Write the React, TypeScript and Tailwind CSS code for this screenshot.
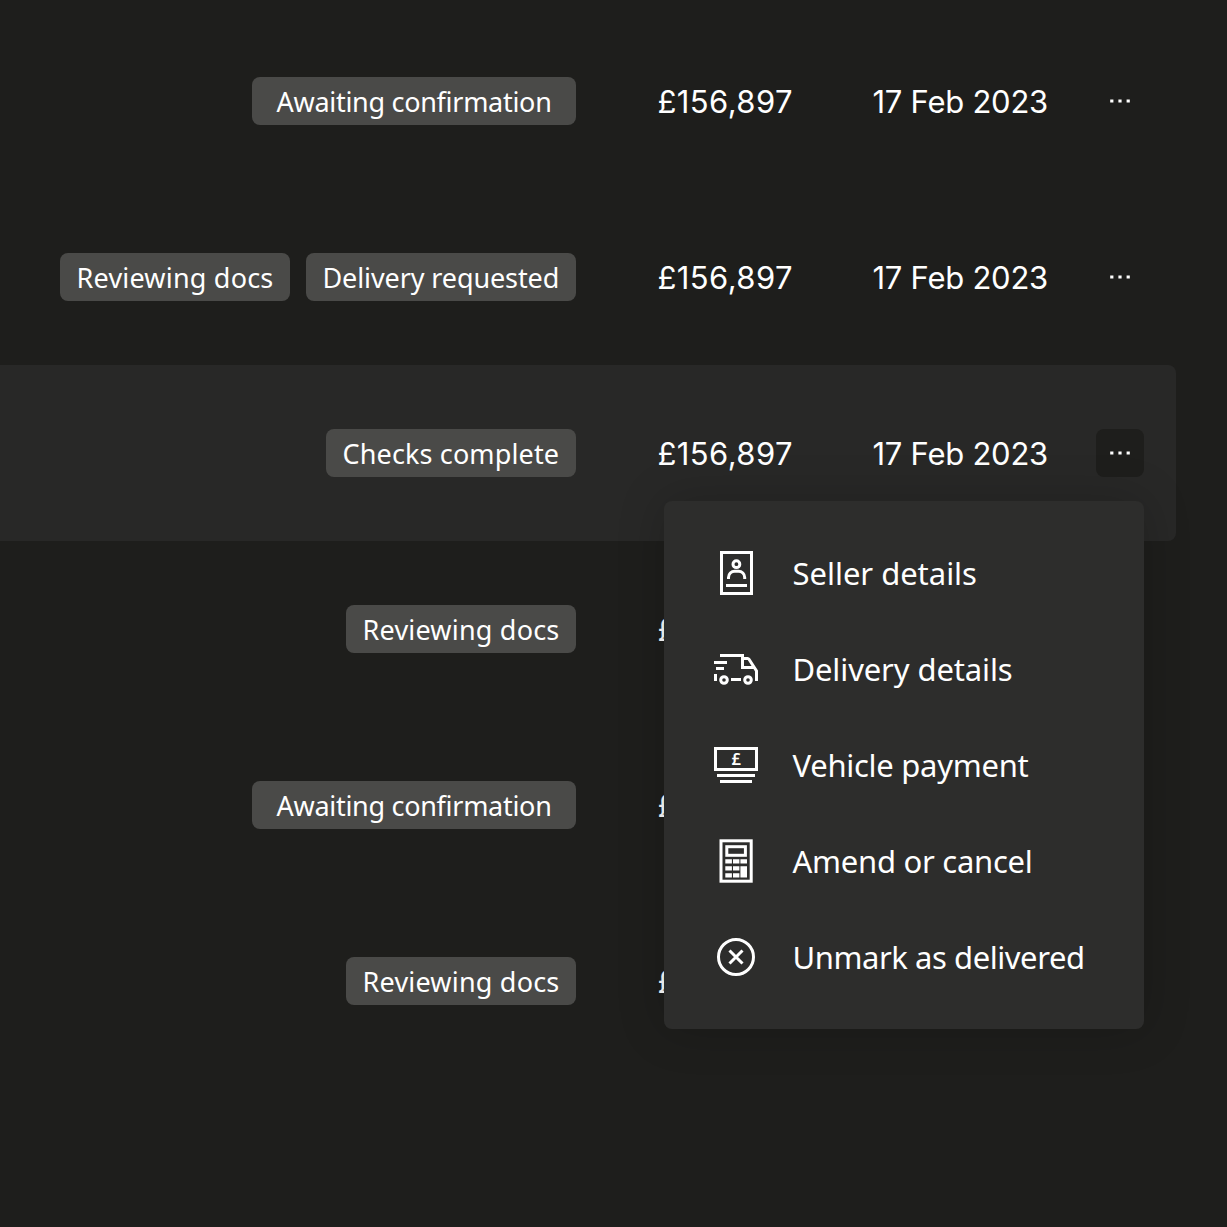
import type { ReactNode } from "react";

type Tag = "awaiting" | "reviewing" | "requested" | "checks";

const tags: Record<Tag, { label: string; style: string }> = {
  awaiting: { label: "Awaiting confirmation", style: "w-[324px] pl-[24.5px] tracking-[-0.29px]" },
  reviewing: { label: "Reviewing docs", style: "w-[230px] pl-[16.5px] tracking-[0.2px]" },
  requested: { label: "Delivery requested", style: "w-[270px] pl-[16.5px] tracking-[-0.11px]" },
  checks: { label: "Checks complete", style: "w-[250px] pl-[16.5px] tracking-[0.14px]" },
};

const rows: { tags: Tag[]; date?: string; open?: boolean }[] = [
  { tags: ["awaiting"], date: "17 Feb 2023" },
  { tags: ["reviewing", "requested"], date: "17 Feb 2023" },
  { tags: ["checks"], date: "17 Feb 2023", open: true },
  { tags: ["reviewing"] },
  { tags: ["awaiting"] },
  { tags: ["reviewing"] },
];

function Icon({ children }: { children: ReactNode }) {
  return (
    <svg className="size-12 shrink-0" viewBox="0 0 48 48" fill="none" stroke="currentColor" strokeWidth="3">
      {children}
    </svg>
  );
}

const SellerIcon = () => (
  <Icon>
    <rect x="9.5" y="3.5" width="30" height="41" />
    <circle cx="24.4" cy="15.2" r="3.4" />
    <path d="M16.5 30v-1.6a6.2 6.2 0 0 1 6.2-6.2h3.8a6.2 6.2 0 0 1 6.2 6.2V30M14 36.5h21" />
  </Icon>
);

const TruckIcon = () => (
  <Icon>
    <path d="M8 10.5h24M2 17.5h13M4 23.5h8M3.5 29v7M19 34.5h10" />
    <path d="M30.5 9v13.5h12.3M32 13.5h3.6q.9 0 1.4.8L44.5 26v10" />
    <circle cx="12" cy="35" r="3.3" />
    <circle cx="36" cy="35" r="3.3" />
  </Icon>
);

const PaymentIcon = () => (
  <Icon>
    <path d="M3.5 7.5h41v21h-41zM5 34.5h38M8 40.5h32" />
    <text
      x="24.3"
      y="24"
      textAnchor="middle"
      fill="currentColor"
      stroke="none"
      className="font-['Noto_Sans'] text-[16.5px] font-semibold"
    >
      £
    </text>
  </Icon>
);

const CalculatorIcon = () => (
  <Icon>
    <rect x="9" y="3.8" width="30.2" height="40.4" />
    <rect x="14.8" y="9.7" width="18.6" height="8.6" />
    <path
      fill="currentColor"
      stroke="none"
      d="M13.3 22.2h6.6v4.2h-6.6zM21 22.2h6.4v4.2H21zM28.4 22.2H35v4.2h-6.6zM13.3 29.2h6.6v4.2h-6.6zM21 29.2h6.4v4.2H21zM13.3 36.2h6.6v4.2h-6.6zM21 36.2h6.4v4.2H21zM28.4 29.2H35v11.2h-6.6z"
    />
  </Icon>
);

const CancelIcon = () => (
  <Icon>
    <circle cx="24" cy="24" r="17.5" />
    <path d="m17.5 17.5 13 13m0-13-13 13" />
  </Icon>
);

const menu = [
  { label: "Seller details", icon: SellerIcon, style: "tracking-[-0.03px]" },
  { label: "Delivery details", icon: TruckIcon, style: "tracking-[-0.12px]" },
  { label: "Vehicle payment", icon: PaymentIcon, style: "tracking-[-0.28px]" },
  { label: "Amend or cancel", icon: CalculatorIcon, style: "tracking-[-0.26px]" },
  { label: "Unmark as delivered", icon: CancelIcon, style: "tracking-[-0.44px]" },
];

function Menu() {
  return (
    <div className="absolute top-[72px] right-0 z-10 w-[480px] rounded-lg bg-[#2d2d2c] py-6 shadow-[0_0_48px_rgba(0,0,0,0.2)]">
      {menu.map(({ label, icon: ItemIcon, style }) => (
        <button key={label} className="flex h-24 w-full items-center gap-[32.5px] pl-12 text-left">
          <ItemIcon />
          <span className={`whitespace-nowrap ${style}`}>{label}</span>
        </button>
      ))}
    </div>
  );
}

export default function App() {
  return (
    <main className="h-[1227px] w-[1227px] overflow-hidden bg-[#1e1e1c] pt-[13px] font-['Noto_Sans',sans-serif] text-[31px] leading-[32px] text-white">
      {rows.map((row, i) => (
        <div
          key={i}
          className={`flex h-44 w-[1176px] items-center rounded-r-lg pr-8 ${row.open ? "bg-[#282827]" : ""}`}
        >
          <div className="flex w-[576px] justify-end gap-4">
            {row.tags.map((tag) => (
              <span
                key={tag}
                className={`flex h-12 items-center rounded-lg bg-[#4a4a48] pt-0.5 text-[27px] leading-[28px] whitespace-nowrap ${tags[tag].style}`}
              >
                {tags[tag].label}
              </span>
            ))}
          </div>
          <span className="ml-[81.5px] w-[215px] pt-0.5 font-['Inter',sans-serif] tracking-[0.4px]">£156,897</span>
          <span className="w-[223.5px] pt-0.5 font-['Inter',sans-serif] tracking-[-0.25px] whitespace-nowrap">
            {row.date}
          </span>
          <div className="relative">
            <button
              aria-label="More options"
              className={`flex size-12 items-center justify-center rounded-lg ${row.open ? "bg-[#1e1e1c]" : ""}`}
            >
              <svg className="size-6" viewBox="0 0 24 24" fill="currentColor">
                <path d="M2.2 10.4h3.2v3.2H2.2zM10.4 10.4h3.2v3.2h-3.2zM18.6 10.4h3.2v3.2h-3.2z" />
              </svg>
            </button>
            {row.open && <Menu />}
          </div>
        </div>
      ))}
    </main>
  );
}
